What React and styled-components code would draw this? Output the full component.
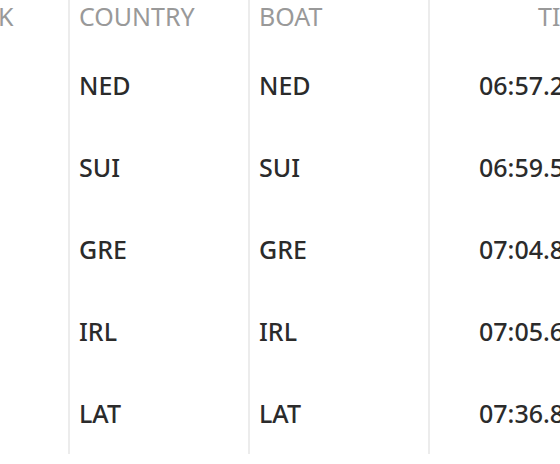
import React from "react";
import styled, { createGlobalStyle } from "styled-components";

const Global = createGlobalStyle`
  html, body { margin: 0; padding: 0; background: #fff; overflow: hidden; }
  body { font-family: "Noto Sans", "Open Sans", sans-serif; }
`;

const Viewport = styled.div`
  width: 560px;
  height: 464px;
  overflow: hidden;
  background: #fff;
`;

const Table = styled.table`
  margin-left: -112px;
  border-collapse: separate;
  border-spacing: 0;
  table-layout: fixed;
  width: 840px;
  font-size: 25px;
`;

const HeadCell = styled.th`
  box-sizing: border-box;
  height: 44px;
  padding: 0 ${(p) => p.$padR || 0}px 12px ${(p) => p.$pad ?? 9}px;
  line-height: 32px;
  font-weight: 400;
  color: #999;
  text-transform: uppercase;
  text-align: ${(p) => p.$align || "left"};
  vertical-align: top;
  border-left: ${(p) => (p.$first ? "none" : "2px solid #ececec")};
  white-space: nowrap;
  overflow: hidden;
`;

const Cell = styled.td`
  box-sizing: border-box;
  height: 82px;
  padding: 0 ${(p) => p.$padR || 0}px 0 ${(p) => p.$pad ?? 9}px;
  line-height: 36px;
  font-weight: 500;
  color: #2b2b2b;
  text-align: ${(p) => p.$align || "left"};
  vertical-align: middle;
  border-left: ${(p) => (p.$first ? "none" : "2px solid #ececec")};
  white-space: nowrap;
  overflow: hidden;
`;

const rows = [
  { rank: 1, country: "NED", boat: "NED", time: "06:57.2" },
  { rank: 2, country: "SUI", boat: "SUI", time: "06:59.5" },
  { rank: 3, country: "GRE", boat: "GRE", time: "07:04.8" },
  { rank: 4, country: "IRL", boat: "IRL", time: "07:05.6" },
  { rank: 5, country: "LAT", boat: "LAT", time: "07:36.8" },
];

export default function App() {
  return (
    <Viewport>
      <Global />
      <Table>
        <colgroup>
          <col style={{ width: 180 }} />
          <col style={{ width: 180 }} />
          <col style={{ width: 180 }} />
          <col style={{ width: 300 }} />
        </colgroup>
        <thead>
          <tr>
            <HeadCell $first $align="center" $pad={5}>Rank</HeadCell>
            <HeadCell>Country</HeadCell>
            <HeadCell>Boat</HeadCell>
            <HeadCell $pad={108}>Time</HeadCell>
          </tr>
        </thead>
        <tbody>
          {rows.map((r) => (
            <tr key={r.rank}>
              <Cell $first $align="center" $pad={5}>{r.rank}</Cell>
              <Cell>{r.country}</Cell>
              <Cell>{r.boat}</Cell>
              <Cell $pad={49}>{r.time}</Cell>
            </tr>
          ))}
        </tbody>
      </Table>
    </Viewport>
  );
}
